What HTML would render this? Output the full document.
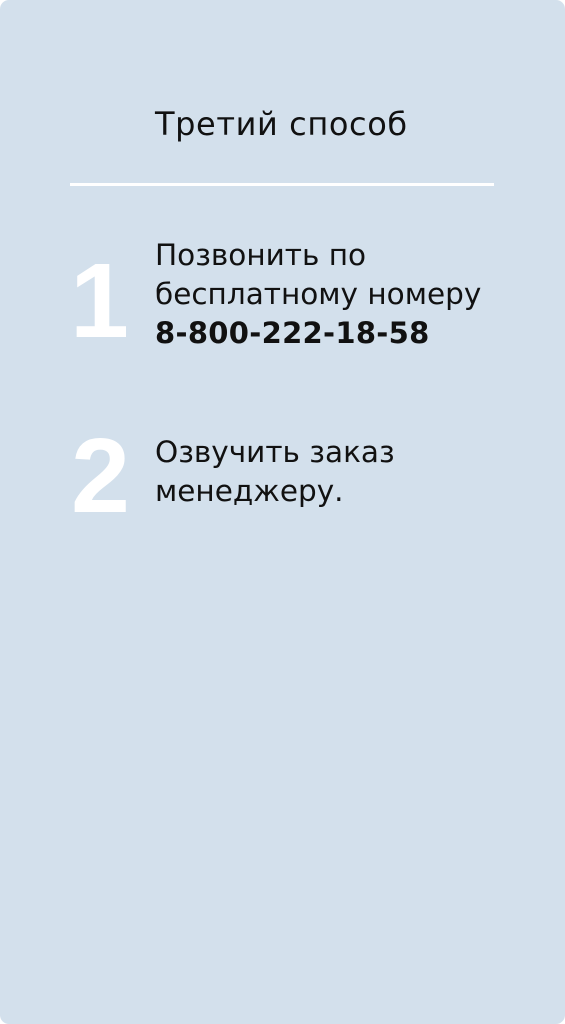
<!DOCTYPE html>
<html><head><meta charset="utf-8"><style>
html,body{margin:0;padding:0;background:#fff;}
.card{position:relative;width:565px;height:1024px;background:#d3e0ec;border-radius:9px;overflow:hidden;font-family:"DejaVu Sans","Liberation Sans",sans-serif;color:#111;}
.t{position:absolute;white-space:nowrap;}
.title{left:155px;top:105px;font-size:32px;letter-spacing:0.6px;}
.line{position:absolute;left:70px;top:183px;width:424px;height:3px;background:#fff;}
.n{position:absolute;color:#fff;font-weight:bold;font-size:106px;line-height:1;font-family:"Liberation Sans",sans-serif;}
.p{left:155px;font-size:29.5px;line-height:39px;}
.p b{letter-spacing:0.3px;font-size:29px;}
</style></head><body><div class="card">
<div class="t title">Третий способ</div>
<div class="line"></div>
<div class="n" style="left:70px;top:248px;">1</div>
<div class="t p" style="top:236px;">Позвонить по<br>бесплатному номеру<br><b>8-800-222-18-58</b></div>
<div class="n" style="left:71px;top:423px;">2</div>
<div class="t p" style="top:433px;">Озвучить заказ<br>менеджеру.</div>
</div></body></html>
